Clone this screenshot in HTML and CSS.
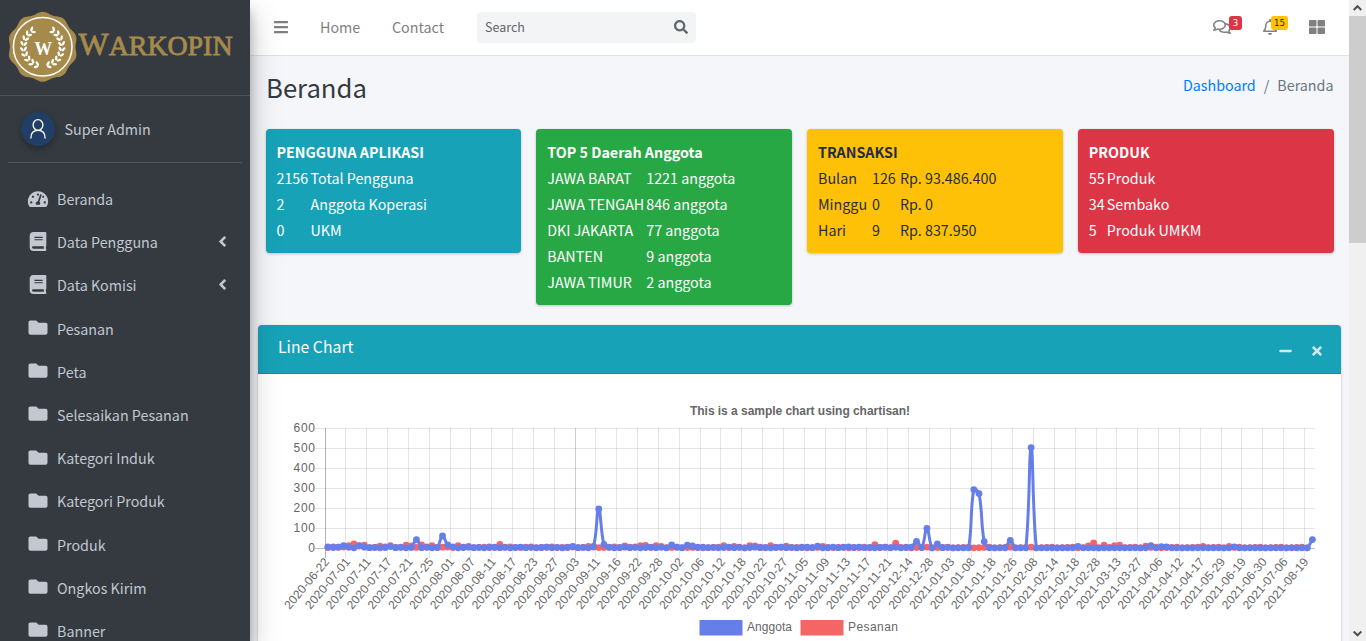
FILE: index.html
```html
<!DOCTYPE html>
<html lang="id">
<head>
<meta charset="utf-8">
<title>Warkopin | Beranda</title>
<link rel="stylesheet" href="styles.css">
</head>
<body>
<svg class="defs" aria-hidden="true">
  <symbol id="i-bars" viewBox="0 0 448 512"><path d="M16 132h416c8.8 0 16-7.200 16-16V76c0-8.800-7.200-16-16-16H16C7.200 60 0 67.200 0 76v40c0 8.800 7.200 16 16 16zm0 160h416c8.800 0 16-7.200 16-16v-40c0-8.800-7.200-16-16-16H16c-8.800 0-16 7.200-16 16v40c0 8.800 7.200 16 16 16zm0 160h416c8.800 0 16-7.200 16-16v-40c0-8.800-7.200-16-16-16H16c-8.800 0-16 7.200-16 16v40c0 8.800 7.200 16 16 16z"/></symbol>
  <symbol id="i-search" viewBox="0 0 512 512"><path d="M505 442.700L405.300 343c-4.500-4.500-10.600-7-17-7H372c27.600-35.300 44-79.700 44-128C416 93.100 322.900 0 208 0S0 93.100 0 208s93.100 208 208 208c48.300 0 92.700-16.400 128-44v16.300c0 6.400 2.500 12.500 7 17l99.700 99.700c9.400 9.400 24.600 9.400 33.900 0l28.300-28.300c9.400-9.400 9.400-24.600.1-34zM208 336c-70.700 0-128-57.200-128-128 0-70.700 57.200-128 128-128 70.700 0 128 57.200 128 128 0 70.700-57.200 128-128 128z"/></symbol>
  <symbol id="i-dash" viewBox="0 0 576 512"><path d="M288 32C128.940 32 0 160.940 0 320c0 52.800 14.250 102.260 39.060 144.800 5.610 9.620 16.300 15.200 27.440 15.200h443c11.140 0 21.830-5.580 27.440-15.200C561.750 422.260 576 372.800 576 320c0-159.060-128.940-288-288-288zm0 64c14.710 0 26.580 10.130 30.320 23.650-1.110 2.260-2.640 4.230-3.450 6.670l-9.220 27.670c-5.130 3.490-10.970 6.010-17.640 6.010-17.670 0-32-14.330-32-32S270.330 96 288 96zM96 384c-17.670 0-32-14.330-32-32s14.330-32 32-32 32 14.330 32 32-14.330 32-32 32zm48-160c-17.670 0-32-14.330-32-32s14.330-32 32-32 32 14.330 32 32-14.330 32-32 32zm246.770-72.410l-61.330 184C343.130 347.330 352 364.540 352 384c0 11.720-3.380 22.550-8.880 32H232.880c-5.500-9.450-8.880-20.280-8.880-32 0-33.940 26.500-61.430 59.900-63.590l61.340-184.010c4.170-12.560 17.730-19.450 30.360-15.170 12.570 4.190 19.350 17.790 15.170 30.360zm14.660 57.200l15.520-46.550c3.470-1.290 7.130-2.230 11.050-2.230 17.670 0 32 14.330 32 32s-14.330 32-32 32c-11.380-.010-20.890-6.280-26.570-15.220zM480 384c-17.670 0-32-14.330-32-32s14.330-32 32-32 32 14.330 32 32-14.330 32-32 32z"/></symbol>
  <symbol id="i-book" viewBox="0 0 448 512"><path d="M448 360V24c0-13.300-10.700-24-24-24H96C43 0 0 43 0 96v320c0 53 43 96 96 96h328c13.300 0 24-10.700 24-24v-16c0-7.500-3.500-14.300-8.900-18.700-4.200-15.400-4.200-59.300 0-74.700 5.400-4.300 8.900-11.100 8.900-18.600zM128 134c0-3.300 2.700-6 6-6h212c3.300 0 6 2.700 6 6v20c0 3.300-2.700 6-6 6H134c-3.300 0-6-2.700-6-6v-20zm0 64c0-3.300 2.700-6 6-6h212c3.300 0 6 2.700 6 6v20c0 3.300-2.700 6-6 6H134c-3.300 0-6-2.700-6-6v-20zm253.400 250H96c-17.700 0-32-14.300-32-32 0-17.600 14.400-32 32-32h285.400c-1.900 17.100-1.900 46.900 0 64z"/></symbol>
  <symbol id="i-folder" viewBox="0 0 512 512"><path d="M464 128H272l-64-64H48C21.490 64 0 85.490 0 112v288c0 26.510 21.490 48 48 48h416c26.510 0 48-21.490 48-48V176c0-26.510-21.490-48-48-48z"/></symbol>
  <symbol id="i-left" viewBox="0 0 256 512"><path d="M31.700 239l136-136c9.400-9.400 24.600-9.400 33.900 0l22.600 22.600c9.400 9.400 9.400 24.600 0 33.900L127.900 256l96.400 96.400c9.400 9.400 9.400 24.600 0 33.900L201.700 409c-9.400 9.400-24.600 9.400-33.900 0l-136-136c-9.500-9.400-9.500-24.600-.1-34z"/></symbol>
  <symbol id="i-large" viewBox="0 0 512 512"><path d="M296 32h192c13.255 0 24 10.745 24 24v160c0 13.255-10.745 24-24 24H296c-13.255 0-24-10.745-24-24V56c0-13.255 10.745-24 24-24zm-80 0H24C10.745 32 0 42.745 0 56v160c0 13.255 10.745 24 24 24h192c13.255 0 24-10.745 24-24V56c0-13.255-10.745-24-24-24zM0 296v160c0 13.255 10.745 24 24 24h192c13.255 0 24-10.745 24-24V296c0-13.255-10.745-24-24-24H24c-13.255 0-24 10.745-24 24zm296 184h192c13.255 0 24-10.745 24-24V296c0-13.255-10.745-24-24-24H296c-13.255 0-24 10.745-24 24v160c0 13.255 10.745 24 24 24z"/></symbol>
  <symbol id="i-comments" viewBox="0 0 576 512"><path d="M532 386.200c27.500-27.100 44-61.100 44-98.200 0-80-76.500-146.100-176.200-157.900C368.300 72.500 294.300 32 208 32 93.100 32 0 103.600 0 192c0 37 16.500 71 44 98.200-15.300 30.700-37.300 54.500-37.700 54.900-6.300 6.700-8.100 16.500-4.400 25 3.600 8.500 12 14 21.200 14 53.500 0 96.700-20.200 125.200-38.800 9.200 2.100 18.700 3.700 28.400 4.900C208.100 407.600 281.800 448 368 448c20.800 0 40.800-2.400 59.800-6.800C456.300 459.700 499.400 480 553 480c9.200 0 17.500-5.500 21.200-14 3.600-8.500 1.900-18.300-4.400-25-.4-.3-22.500-24.100-37.800-54.800zm-392.800-92.300L122.100 305c-14.100 9.100-28.500 16.300-43.100 21.400 2.700-4.700 5.400-9.700 8-14.800l15.500-31.100L77.700 256C64.200 242.600 48 220.700 48 192c0-60.700 73.300-112 160-112s160 51.300 160 112-73.300 112-160 112c-16.500 0-33-1.900-49-5.600l-19.800-4.500zM498.300 352l-24.700 24.400 15.500 31.100c2.600 5.100 5.300 10.100 8 14.800-14.600-5.100-29-12.300-43.100-21.400l-17.100-11.100-19.900 4.600c-16 3.700-32.500 5.600-49 5.600-54 0-102.200-20.100-131.300-49.700C338 339.500 416 272.900 416 192c0-3.400-.4-6.700-.7-10C479.700 196.500 528 238.800 528 288c0 28.700-16.200 50.600-29.700 64z"/></symbol>
  <symbol id="i-bell" viewBox="0 0 448 512"><path d="M439.390 362.290c-19.320-20.760-55.470-51.990-55.470-154.290 0-77.700-54.480-139.900-127.940-155.160V32c0-17.670-14.320-32-31.980-32s-31.980 14.330-31.980 32v20.840C118.560 68.100 64.080 130.300 64.080 208c0 102.300-36.150 133.530-55.470 154.290-6 6.450-8.660 14.160-8.610 21.710.11 16.400 12.980 32 32.100 32h383.800c19.120 0 32-15.600 32.100-32 .05-7.550-2.610-15.270-8.610-21.710zM67.530 368c21.220-27.970 44.420-74.330 44.530-159.420 0-.2-.06-.38-.06-.58 0-61.860 50.140-112 112-112s112 50.140 112 112c0 .2-.06.38-.06.58.11 85.100 23.310 131.460 44.530 159.420H67.530zM224 512c35.320 0 63.970-28.650 63.970-64H160.030c0 35.350 28.650 64 63.970 64z"/></symbol>
  <symbol id="i-minus" viewBox="0 0 448 512"><path d="M416 208H32c-17.670 0-32 14.330-32 32v32c0 17.670 14.330 32 32 32h384c17.670 0 32-14.330 32-32v-32c0-17.670-14.330-32-32-32z"/></symbol>
  <symbol id="i-times" viewBox="0 0 352 512"><path d="M242.720 256l100.070-100.070c12.280-12.280 12.280-32.190 0-44.480l-22.240-22.240c-12.280-12.280-32.190-12.280-44.480 0L176 189.280 75.930 89.210c-12.280-12.280-32.190-12.280-44.480 0L9.210 111.450c-12.280 12.280-12.280 32.190 0 44.480L109.280 256 9.210 356.070c-12.280 12.280-12.280 32.190 0 44.480l22.240 22.240c12.280 12.280 32.200 12.280 44.480 0L176 322.720l100.070 100.070c12.280 12.280 32.200 12.280 44.480 0l22.240-22.240c12.280-12.280 12.280-32.190 0-44.480L242.720 256z"/></symbol>
</svg>

<aside class="sidebar">
  <a class="brand">
    <svg class="brand-logo" width="234" height="76" viewBox="0 0 234 76">
      <path id="seal" fill="#a58a4c"/>
      <circle cx="34.700" cy="38.800" r="29.300" fill="none" stroke="#fff" stroke-width="1.500"/>
      <g id="wreath" fill="#fff"></g>
      <text class="logo-w" x="35.200" y="47" text-anchor="middle" textLength="17.500" lengthAdjust="spacingAndGlyphs">W</text>
      <text class="logo-name" x="70.500" y="46.500" textLength="154" lengthAdjust="spacingAndGlyphs">W<tspan class="logo-rest">ARKOPIN</tspan></text>
    </svg>
  </a>
  <div class="user">
    <svg class="avatar" width="34" height="34" viewBox="0 0 34 34"><circle cx="17" cy="17" r="17" fill="#213f66"/><g fill="none" stroke="#fff" stroke-width="1.300" stroke-linecap="round"><ellipse cx="17" cy="13" rx="4.900" ry="5.300"/><path d="M9.900 26c0-4.900 2.800-7.600 7.100-7.600s7.100 2.700 7.100 7.600"/></g></svg>
    <span>Super Admin</span>
  </div>
  <nav class="menu">
    <a class="item"><svg class="ic dash"><use href="#i-dash"/></svg><span>Beranda</span></a>
    <a class="item"><svg class="ic book"><use href="#i-book"/></svg><span>Data Pengguna</span><svg class="arrow"><use href="#i-left"/></svg></a>
    <a class="item"><svg class="ic book"><use href="#i-book"/></svg><span>Data Komisi</span><svg class="arrow"><use href="#i-left"/></svg></a>
    <a class="item"><svg class="ic"><use href="#i-folder"/></svg><span>Pesanan</span></a>
    <a class="item"><svg class="ic"><use href="#i-folder"/></svg><span>Peta</span></a>
    <a class="item"><svg class="ic"><use href="#i-folder"/></svg><span>Selesaikan Pesanan</span></a>
    <a class="item"><svg class="ic"><use href="#i-folder"/></svg><span>Kategori Induk</span></a>
    <a class="item"><svg class="ic"><use href="#i-folder"/></svg><span>Kategori Produk</span></a>
    <a class="item"><svg class="ic"><use href="#i-folder"/></svg><span>Produk</span></a>
    <a class="item"><svg class="ic"><use href="#i-folder"/></svg><span>Ongkos Kirim</span></a>
    <a class="item"><svg class="ic"><use href="#i-folder"/></svg><span>Banner</span></a>
  </nav>
</aside>

<main class="main">
  <header class="topbar">
    <svg class="bars"><use href="#i-bars"/></svg>
    <a class="link-home">Home</a>
    <a class="link-contact">Contact</a>
    <div class="search"><span>Search</span><svg><use href="#i-search"/></svg></div>
    <div class="tools">
      <span class="tool"><svg class="t-comments"><use href="#i-comments"/></svg><b class="badge red">3</b></span>
      <span class="tool"><svg class="t-bell"><use href="#i-bell"/></svg><b class="badge yellow">15</b></span>
      <svg class="t-large"><use href="#i-large"/></svg>
    </div>
  </header>

  <div class="heading">
    <h1>Beranda</h1>
    <div class="crumbs"><a>Dashboard</a><i>/</i><span>Beranda</span></div>
  </div>

  <section class="cards">
    <div class="card info"><strong>PENGGUNA APLIKASI</strong>
      <div class="grid g1"><span>2156</span><span>Total Pengguna</span><span>2</span><span>Anggota Koperasi</span><span>0</span><span>UKM</span></div></div>
    <div class="card success"><strong>TOP 5 Daerah Anggota</strong>
      <div class="grid g2"><span>JAWA BARAT</span><span>1221 anggota</span><span>JAWA TENGAH</span><span>846 anggota</span><span>DKI JAKARTA</span><span>77 anggota</span><span>BANTEN</span><span>9 anggota</span><span>JAWA TIMUR</span><span>2 anggota</span></div></div>
    <div class="card warning"><strong>TRANSAKSI</strong>
      <div class="grid g3"><span>Bulan</span><span>126</span><span>Rp. 93.486.400</span><span>Minggu</span><span>0</span><span>Rp. 0</span><span>Hari</span><span>9</span><span>Rp. 837.950</span></div></div>
    <div class="card danger"><strong>PRODUK</strong>
      <div class="grid g4"><span>55</span><span>Produk</span><span>34</span><span>Sembako</span><span>5</span><span>Produk UMKM</span></div></div>
  </section>

  <section class="panel">
    <div class="panel-head"><h3>Line Chart</h3><svg class="p-minus"><use href="#i-minus"/></svg><svg class="p-times"><use href="#i-times"/></svg></div>
    <svg id="chart" width="1083" height="267" viewBox="258 374 1083 267"></svg>
  </section>
</main>

<div class="scroll">
  <svg width="17" height="17" viewBox="0 0 17 17"><path d="M4.700 10L8.500 6.200 12.300 10" /></svg>
  <div class="thumb"></div>
  <svg width="17" height="17" viewBox="0 0 17 17"><path d="M4.700 7.500L8.500 11.300 12.300 7.500" /></svg>
</div>
<script src="chart.js"></script>
</body>
</html>
```
FILE: styles.css
```css
* { box-sizing: border-box; }
body { margin: 0; width: 1366px; height: 641px; overflow: hidden; display: flex; background: #f4f6f9; color: #212529; font: 14.3px/24px "Noto Sans CJK SC", "Noto Sans", sans-serif; }
svg { display: block; fill: currentColor; }
.defs { position: absolute; width: 0; height: 0; }
span, a, strong, h1, h3 { white-space: nowrap; }

.sidebar { width: 250px; height: 641px; flex: none; background: #343a40; color: #c2c7d0; overflow: visible; z-index: 2; box-shadow: 0 14px 28px rgba(0,0,0,.25), 0 10px 10px rgba(0,0,0,.22); }
.brand { display: block; height: 96px; padding: 8px; border-bottom: 1px solid #4b545c; }
.logo-w { font: bold 18px "Liberation Serif", serif; fill: #fff; }
.logo-name { font: 31px "Liberation Serif", serif; fill: #a58a4c; stroke: #a58a4c; stroke-width: .8; }
.logo-rest { font-size: 27px; }
.user { display: flex; align-items: center; height: 67px; margin: 0 8px; padding-left: 12.500px; gap: 10px; border-bottom: 1px solid #4f5962; }
.avatar { border-radius: 50%; box-shadow: 0 3px 6px rgba(0,0,0,.3); }
.menu { padding: 16px 8px 0; }
.item { display: flex; align-items: center; height: 40px; margin-bottom: 3.200px; padding-left: 19px; }
.ic { width: 22px; height: 19px; margin: 0 8px 2px 0; }
.ic.dash { height: 18px; margin-bottom: 1px; }
.arrow { width: 9px; height: 17px; margin: 0 15.500px 2px auto; }

.main { width: 1099px; flex: none; height: 641px; overflow: hidden; }
.topbar { height: 56px; background: #fff; border-bottom: 1px solid #dee2e6; display: flex; align-items: center; padding: 0 0 1px 24px; color: #808080; }
.bars { width: 14px; height: 16px; }
.link-home { margin-left: 32px; width: 40px; }
.link-contact { margin-left: 32px; width: 53px; }
.link-home, .link-contact { padding-bottom: 1px; }
.search { margin: 1px 0 0 32px; width: 219px; height: 31px; border-radius: 4px; background: #f2f4f6; display: flex; align-items: center; justify-content: space-between; padding: 0 8px 2px; font-size: 12.500px; color: #60666b; }
.search svg { width: 14px; height: 14px; }
.tools { margin-left: auto; display: flex; align-items: center; padding-right: 24px; }
.tool { position: relative; margin-right: 29px; }
.t-comments { width: 18px; height: 16px; margin-right: 3px; }
.t-bell { width: 14px; height: 16px; margin-right: 3px; }
.t-large { width: 16px; height: 16px; }
.badge { position: absolute; left: 16px; top: -3px; width: 13px; height: 14px; text-align: center; border-radius: 3px; font: 8.500px/14px "DejaVu Sans", sans-serif; }
.tool .yellow { left: 8px; width: 17px; }
.red { background: #dc3545; color: #fff; }
.yellow { background: #ffc107; color: #1f2d3d; }

.heading { display: flex; justify-content: space-between; height: 73px; padding: 13px 15.500px 0 16px; }
h1 { margin: 0; font-weight: 400; font-size: 25.700px; line-height: 35px; color: #343a40; }
.crumbs { display: flex; gap: 8px; padding-top: 4px; color: #6c757d; }
.crumbs a { color: #007bff; }
.crumbs i { font-style: normal; }

.cards { display: grid; grid-template-columns: repeat(4, 255.750px); column-gap: 15px; align-items: start; padding-left: 15.500px; height: 196px; }
.card { padding: 10px 11px; border-radius: 4px; color: #fff; line-height: 26px; box-shadow: 0 0 1px rgba(0,0,0,.125), 0 1px 3px rgba(0,0,0,.2); }
.card strong { display: block; height: 26px; font-weight: 700; }
.grid { display: grid; }
.g1 { grid-template-columns: 34px 1fr; }
.g2 { grid-template-columns: 99px 1fr; }
.g3 { grid-template-columns: 54px 28px 1fr; }
.g4 { grid-template-columns: 18px 1fr; }
.info { background: #17a2b8; }
.success { background: #28a745; }
.warning { background: #ffc107; color: #1f2d3d; }
.danger { background: #dc3545; }

.panel { margin: 0 8px; width: 1083px; height: 330px; background: #fff; border-radius: 4px; box-shadow: 0 0 1px rgba(0,0,0,.125), 0 1px 3px rgba(0,0,0,.2); }
.panel-head { height: 49px; background: #17a2b8; color: #fff; border-bottom: 1px solid #148ea1; border-radius: 4px 4px 0 0; display: flex; padding: 0 18px 0 20px; }
h3 { margin: 10px auto 0 0; font-weight: 400; font-size: 15.800px; line-height: 24px; }
.panel-head svg { height: 14px; margin-top: 18.500px; opacity: .8; }
.p-minus { width: 13px; margin-right: 19px; }
.p-times { width: 12px; }
#chart text { font: 12px "Liberation Sans", Arial, sans-serif; fill: #666; }
#chart .chart-title { font-weight: bold; }

.scroll { width: 17px; flex: none; height: 641px; background: #f0f0f0; display: flex; flex-direction: column; }
.scroll path { fill: none; stroke: #505050; stroke-width: 2; }
.thumb { height: 227px; margin-top: -1px; margin-bottom: auto; background: #cdcdcd; }
```
FILE: chart.js
```javascript
// Scalloped seal with a laurel wreath
const f = n => n.toFixed(2);
let seal = '';
for (let i = 0; i < 180; i++) {
  const a = i * Math.PI / 90;
  const r = 33.900 + 1.100 * Math.cos(10 * (a - Math.PI / 2));
  seal += (i ? 'L' : 'M') + f(34.700 + r * Math.cos(a)) + ' ' + f(38.800 + r * Math.sin(a));
}
document.getElementById('seal').setAttribute('d', seal + 'Z');
let leaves = '';
for (const side of [-1, 1]) {
  for (let k = 0; k < 9; k++) {
    const a = (72 - k * 16.300) * Math.PI / 180;
    for (const [r, tilt] of [[21, 35], [17.500, -35]]) {
      const x = 34.700 + side * r * Math.cos(a), y = 38.800 + r * Math.sin(a);
      const rot = side * (a * 180 / Math.PI - 90 + tilt);
      leaves += `<ellipse cx="${f(x)}" cy="${f(y)}" rx="2.500" ry="1.250" transform="rotate(${f(rot)} ${f(x)} ${f(y)})"/>`;
    }
  }
}
document.getElementById('wreath').innerHTML = leaves;

// Line chart
const labels = ('2020: 06-22 07-01 07-11 07-17 07-21 07-25 08-01 08-07 08-11 08-17 08-23 08-27 09-03 09-11 09-16 09-22 09-28 10-02 10-06 10-12 10-18 10-22 10-27 11-05 11-09 11-13 11-17 11-21 12-14 12-28 ' +
  '2021: 01-03 01-08 01-18 01-26 02-08 02-14 02-18 02-28 03-13 03-27 04-06 04-12 04-17 05-29 06-19 06-30 07-06 08-19').split(' ');
const N = 190, X0 = 325, STEP = 989.700 / N, Y0 = 548;
const series = (base, values) => Array.from({ length: N }, (_, i) => values[i] ?? base(i));
const anggota = series(i => i < 120 ? 1 + (i * 7 % 5) * .8 : 1, {
  0: 5, 3: 12, 6: 12, 7: 4, 12: 7, 17: 42, 22: 60, 23: 15, 24: 6, 47: 8, 51: 8, 52: 195, 53: 18,
  66: 15, 69: 14, 70: 10, 94: 9, 100: 6, 113: 33, 114: 2, 115: 98, 116: 1, 117: 20, 123: 1, 124: 292, 125: 272, 126: 32, 131: 38,
  135: 502, 144: 8, 158: 12, 160: 7, 161: 6, 174: 6, 189: 42 });
const pesanan = series(i => i < 60 ? 2 + (i * 5 % 4) : 1 + (i * 5 % 4), {
  1: 5, 4: 12, 5: 20, 6: 10, 7: 14, 10: 9, 12: 12, 15: 14, 16: 11, 18: 16, 20: 12, 25: 12, 27: 8, 33: 18, 50: 8, 57: 10,
  60: 12, 61: 13, 63: 12, 64: 8, 76: 12, 78: 8, 81: 12, 82: 11, 85: 12, 88: 9, 95: 8, 105: 17, 109: 24,
  146: 10, 147: 26, 149: 14, 151: 12, 152: 14, 157: 9, 168: 8, 173: 8, 188: 1 }).slice(0, N - 1);
const px = i => X0 + .3 + (i + .5) * STEP;
const py = v => Y0 - v * .2;
let out = '<text class="chart-title" x="800" y="415" text-anchor="middle" textLength="220">This is a sample chart using chartisan!</text>';
for (let v = 0; v <= 600; v += 100) {
  const y = Y0 - v / 5 + .5;
  out += `<path d="M315 ${y}H1315" stroke="#000" stroke-opacity="${v ? .1 : .25}"/><text x="315" y="${y + 3.500}" text-anchor="end"${v ? ' textLength="21.500"' : ''}>${v}</text>`;
}
let year = '', tick = 0;
for (const part of labels) {
  if (part.endsWith(':')) { year = part.slice(0, 4); continue; }
  const x = X0 + tick * 4 * STEP;
  out += `<path d="M${Math.floor(x + .1) + .5} 428V558" stroke="#000" stroke-opacity="${tick ? (tick === 12 ? .2 : .1) : .3}"/>`;
  out += `<text transform="translate(${f(x + 1.800)} 559.500) rotate(-50)" x="0" y="4" text-anchor="end" textLength="62.500">${year}-${part}</text>`;
  tick++;
}
function draw(data, color) {
  const pts = data.map((v, i) => [px(i), py(v)]);
  const dist = (a, b) => Math.hypot(a[0] - b[0], a[1] - b[1]);
  const clampY = y => Math.min(Y0, Math.max(428, y));
  const ctl = pts.map((p, i) => {
    const a = pts[i - 1] || p, b = pts[i + 1] || p;
    const d1 = dist(a, p), d2 = dist(p, b), s = .4 / (d1 + d2);
    return [p[0] - d1 * s * (b[0] - a[0]), clampY(p[1] - d1 * s * (b[1] - a[1])), p[0] + d2 * s * (b[0] - a[0]), clampY(p[1] + d2 * s * (b[1] - a[1]))];
  });
  let d = `M${f(pts[0][0])} ${f(pts[0][1])}`;
  for (let i = 1; i < pts.length; i++) d += `C${f(ctl[i - 1][2])} ${f(ctl[i - 1][3])} ${f(ctl[i][0])} ${f(ctl[i][1])} ${f(pts[i][0])} ${f(pts[i][1])}`;
  out += `<path d="${d}" fill="none" stroke="${color}" stroke-width="3"/><g fill="${color}">`;
  for (const p of pts) out += `<circle cx="${f(p[0])}" cy="${f(p[1])}" r="3.400"/>`;
  out += '</g>';
}
draw(pesanan, '#f56565');
draw(anggota, '#667eea');
out += '<rect x="699.500" y="620" width="43" height="15.500" fill="#667eea"/><text x="747" y="631" textLength="45">Anggota</text>';
out += '<rect x="800.500" y="620" width="43" height="15.500" fill="#f56565"/><text x="848" y="631" textLength="50">Pesanan</text>';
document.getElementById('chart').innerHTML = out;
```
